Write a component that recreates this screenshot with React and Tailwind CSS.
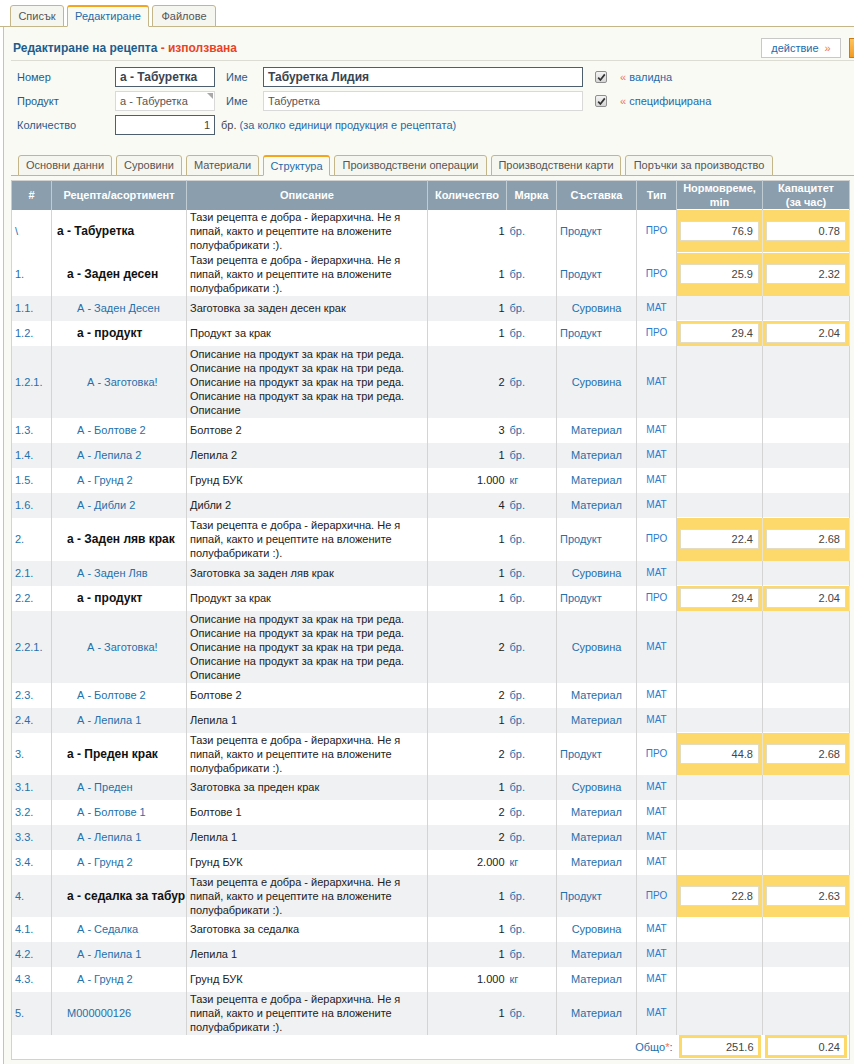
import React from 'react';

const LONG = [
  'Тази рецепта е добра - йерархична. Не я',
  'пипай, както и рецептите на вложените',
  'полуфабрикати :).',
];
const FIVE = [
  'Описание на продукт за крак на три реда.',
  'Описание на продукт за крак на три реда.',
  'Описание на продукт за крак на три реда.',
  'Описание на продукт за крак на три реда.',
  'Описание',
];

// [номер, име, ниво, описание, к-во, мярка, съставка, норма, капацитет, височина, без удебеляване]
const rows = [
  ['\\', 'а - Табуретка', 0, LONG, '1', 'бр.', 'Продукт', '76.9', '0.78', 43],
  ['1.', 'а - Заден десен', 1, LONG, '1', 'бр.', 'Продукт', '25.9', '2.32', 43],
  ['1.1.', 'А - Заден Десен', 2, ['Заготовка за заден десен крак'], '1', 'бр.', 'Суровина'],
  ['1.2.', 'а - продукт', 2, ['Продукт за крак'], '1', 'бр.', 'Продукт', '29.4', '2.04'],
  ['1.2.1.', 'А - Заготовка!', 3, FIVE, '2', 'бр.', 'Суровина', null, null, 72],
  ['1.3.', 'А - Болтове 2', 2, ['Болтове 2'], '3', 'бр.', 'Материал'],
  ['1.4.', 'А - Лепила 2', 2, ['Лепила 2'], '1', 'бр.', 'Материал'],
  ['1.5.', 'А - Грунд 2', 2, ['Грунд БУК'], '1.000', 'кг', 'Материал'],
  ['1.6.', 'А - Дибли 2', 2, ['Дибли 2'], '4', 'бр.', 'Материал'],
  ['2.', 'а - Заден ляв крак', 1, LONG, '1', 'бр.', 'Продукт', '22.4', '2.68', 43],
  ['2.1.', 'А - Заден Ляв', 2, ['Заготовка за заден ляв крак'], '1', 'бр.', 'Суровина'],
  ['2.2.', 'а - продукт', 2, ['Продукт за крак'], '1', 'бр.', 'Продукт', '29.4', '2.04'],
  ['2.2.1.', 'А - Заготовка!', 3, FIVE, '2', 'бр.', 'Суровина', null, null, 72],
  ['2.3.', 'А - Болтове 2', 2, ['Болтове 2'], '2', 'бр.', 'Материал'],
  ['2.4.', 'А - Лепила 1', 2, ['Лепила 1'], '1', 'бр.', 'Материал'],
  ['3.', 'а - Преден крак', 1, LONG, '2', 'бр.', 'Продукт', '44.8', '2.68', 42],
  ['3.1.', 'А - Преден', 2, ['Заготовка за преден крак'], '1', 'бр.', 'Суровина'],
  ['3.2.', 'А - Болтове 1', 2, ['Болтове 1'], '2', 'бр.', 'Материал'],
  ['3.3.', 'А - Лепила 1', 2, ['Лепила 1'], '2', 'бр.', 'Материал'],
  ['3.4.', 'А - Грунд 2', 2, ['Грунд БУК'], '2.000', 'кг', 'Материал'],
  ['4.', 'а - седалка за табур', 1, LONG, '1', 'бр.', 'Продукт', '22.8', '2.63', 42],
  ['4.1.', 'А - Седалка', 2, ['Заготовка за седалка'], '1', 'бр.', 'Суровина'],
  ['4.2.', 'А - Лепила 1', 2, ['Лепила 1'], '1', 'бр.', 'Материал'],
  ['4.3.', 'А - Грунд 2', 2, ['Грунд БУК'], '1.000', 'кг', 'Материал'],
  ['5.', 'M000000126', 1, LONG, '1', 'бр.', 'Материал', null, null, 43],
];

const indent = ['pl-[5px]', 'pl-[15px]', 'pl-[25px]', 'pl-[35px]'];

const topTabs = [
  ['Списък', 'w-[54px]', false],
  ['Редактиране', 'w-[82px]', true],
  ['Файлове', 'w-[64px]', false],
];

const subTabs = [
  ['Основни данни', 'w-[94px]', false],
  ['Суровини', 'w-[66px]', false],
  ['Материали', 'w-[73px]', false],
  ['Структура', 'w-[67px]', true],
  ['Производствени операции', 'w-[153px]', false],
  ['Производствени карти', 'w-[130px]', false],
  ['Поръчки за производство', 'w-[148px]', false],
];

function Tab({ label, width, active, h }) {
  return (
    <div
      className={`${width} ${h} -mb-px flex items-center justify-center rounded-t-[3px] border border-[#c5b68a] ${
        active
          ? 'border-t-2 border-t-[#f3a51b] border-b-[#fafaf5] bg-[#fafaf5] text-[#1f6aa8]'
          : 'bg-[#f6f6f0] text-[#555]'
      }`}
    >
      {label}
    </div>
  );
}

function Check() {
  return (
    <div className="w-[12px] h-[12px] border border-[#8f8f8f] rounded-[2px] bg-gradient-to-b from-[#f4f4f4] to-[#d6d6d6] flex items-center justify-center">
      <svg width="9" height="9" viewBox="0 0 9 9">
        <path d="M1.2 4.6 L3.4 7 L7.8 1.4" fill="none" stroke="#333" strokeWidth="1.7" />
      </svg>
    </div>
  );
}

function YellowCell({ value }) {
  return (
    <td className="bg-[#fdd86a] border-x border-t border-x-[#ece5cc] border-t-white px-[3px] align-middle">
      <div className="h-[20px] bg-white border border-[#e3dcc0] flex items-center justify-end pr-[5px] text-[#444]">
        {value}
      </div>
    </td>
  );
}

export default function App() {
  return (
    <div className="w-[854px] h-[1064px] overflow-hidden bg-white font-['Liberation_Sans',Arial,sans-serif] text-[11px] text-[#333]">
      {/* главни табове */}
      <div className="flex items-end gap-[3px] h-[27px] pl-[10px] border-b border-[#c5b68a]">
        {topTabs.map(([l, w, a]) => (
          <Tab key={l} label={l} width={w} active={a} h="h-[22px]" />
        ))}
      </div>

      <div className="ml-[3px] w-[920px] h-[1040px] border-l border-[#c4c4bb] bg-[#fafaf5] pl-[7px]">
        {/* заглавие */}
        <div className="w-[896px] flex items-center justify-between pt-[11px] pb-[2px] border-b border-[#dcdcd3]">
          <div className="pl-[2px] text-[12px] font-bold text-[#1d5d8c]">
            Редактиране на рецепта <span className="text-[#e9431f]">- използвана</span>
          </div>
          <div className="flex items-center gap-[8px]">
            <div className="w-[80px] h-[20px] border border-[#c8c8c8] bg-white flex items-center justify-center gap-[6px] text-[#1f6aa8]">
              действие <span className="text-[#f2763f]">»</span>
            </div>
            <div className="w-[58px] h-[20px] border border-[#c97a10] bg-gradient-to-b from-[#ffc45a] to-[#f39a1c]" />
          </div>
        </div>

        {/* форма */}
        <div className="pt-[6px] pl-[6px] flex flex-col gap-[4px]">
          <div className="flex items-center h-[20px]">
            <div className="w-[98px] text-[#1d5d8c]">Номер</div>
            <div className="w-[100px] h-[20px] border border-[#4d5e6e] bg-white px-[4px] flex items-center font-bold text-[12px] text-[#3a4450]">
              а - Табуретка
            </div>
            <div className="w-[48px] pl-[11px] text-[#1d5d8c]">Име</div>
            <div className="w-[320px] h-[20px] border border-[#4d5e6e] bg-white px-[4px] flex items-center font-bold text-[12px] text-[#3a4450]">
              Табуретка Лидия
            </div>
            <div className="ml-[12px]"><Check /></div>
            <div className="ml-[13px] text-[#1f6aa8]"><span className="text-[#f2763f]">«</span> валидна</div>
          </div>
          <div className="flex items-center h-[20px]">
            <div className="w-[98px] text-[#1d5d8c]">Продукт</div>
            <div className="relative w-[100px] h-[20px] border border-[#d9d9d9] bg-white px-[4px] flex items-center text-[#555]">
              а - Табуретка
              <div className="absolute top-[1px] right-[1px] w-0 h-0 border-t-[6px] border-l-[6px] border-t-[#a8a8a8] border-l-transparent" />
            </div>
            <div className="w-[48px] pl-[11px] text-[#1d5d8c]">Име</div>
            <div className="w-[320px] h-[20px] border border-[#d9d9d9] bg-white px-[4px] flex items-center text-[#555]">
              Табуретка
            </div>
            <div className="ml-[12px]"><Check /></div>
            <div className="ml-[13px] text-[#1f6aa8]"><span className="text-[#f2763f]">«</span> специфицирана</div>
          </div>
          <div className="flex items-center h-[20px]">
            <div className="w-[98px] text-[#1d5d8c]">Количество</div>
            <div className="w-[100px] h-[20px] border border-[#4d5e6e] bg-white px-[4px] flex items-center justify-end text-[#444]">
              1
            </div>
            <div className="ml-[6px] text-[#444]">
              бр. <span className="text-[#1f6aa8]">(за колко единици продукция е рецептата)</span>
            </div>
          </div>
        </div>

        {/* подтабове */}
        <div className="mt-[20px] w-[843px] flex items-end gap-[4px] h-[21px] pl-[7px] border-b border-[#c5b68a]">
          {subTabs.map(([l, w, a]) => (
            <Tab key={l} label={l} width={w} active={a} h="h-[21px]" />
          ))}
        </div>

        {/* таблица */}
        <table className="mt-[4px] w-[838px] table-fixed border-collapse border border-[#d2d2d2] bg-white">
          <colgroup>
            <col className="w-[40px]" />
            <col className="w-[135px]" />
            <col className="w-[241px]" />
            <col className="w-[79px]" />
            <col className="w-[50px]" />
            <col className="w-[80px]" />
            <col className="w-[40px]" />
            <col className="w-[86px]" />
            <col className="w-[87px]" />
          </colgroup>
          <thead>
            <tr className="h-[29px] bg-[#8a9ead] text-white font-bold text-center leading-[14px]">
              <th className="border-x border-[#c0cbd3]">#</th>
              <th className="border-x border-[#c0cbd3]">Рецепта/асортимент</th>
              <th className="border-x border-[#c0cbd3]">Описание</th>
              <th className="border-x border-[#c0cbd3]">Количество</th>
              <th className="border-x border-[#c0cbd3]">Мярка</th>
              <th className="border-x border-[#c0cbd3]">Съставка</th>
              <th className="border-x border-[#c0cbd3]">Тип</th>
              <th className="border-x border-[#c0cbd3]">Нормовреме,<br />min</th>
              <th className="border-x border-[#c0cbd3]">Капацитет<br />(за час)</th>
            </tr>
          </thead>
          <tbody>
            {rows.map((r, i) => {
              const [num, name, depth, desc, qty, unit, comp, norm, cap, h] = r;
              const isProd = comp === 'Продукт';
              const gray = i > 0 && i % 2 === 0;
              return (
                <tr
                  key={num}
                  className={`${h === 72 ? 'h-[72px]' : h === 43 ? 'h-[43px]' : h === 42 ? 'h-[42px]' : 'h-[25px]'} ${gray ? 'bg-[#f0f1f3]' : 'bg-white'} leading-[14px]`}
                >
                  <td className="border-x border-[#d4d4d4] pl-[3px] text-[#2470ab]">{num}</td>
                  <td className={`border-x border-[#d4d4d4] ${indent[depth]} whitespace-nowrap overflow-hidden ${isProd ? 'font-bold text-[12px] text-[#111]' : 'text-[#2470ab]'}`}>
                    {name}
                  </td>
                  <td className="border-x border-[#d4d4d4] pl-[3px] whitespace-nowrap text-[#222]">
                    {desc.map((d, k) => (
                      <div key={k}>{d}</div>
                    ))}
                  </td>
                  <td className="border-l border-[#d4d4d4] pr-[2px] text-right text-[#222]">{qty}</td>
                  <td className="border-r border-[#d4d4d4] pl-[3px] text-[#2470ab]">{unit}</td>
                  <td className={`border-x border-[#d4d4d4] text-[#2470ab] ${isProd ? 'pl-[3px]' : 'text-center'}`}>{comp}</td>
                  <td className="border-x border-[#d4d4d4] text-center text-[10px] text-[#2a7bd0]">{isProd ? 'ПРО' : 'МАТ'}</td>
                  {norm ? (
                    <>
                      <YellowCell value={norm} />
                      <YellowCell value={cap} />
                    </>
                  ) : (
                    <>
                      <td className="border-x border-[#d4d4d4]" />
                      <td className="border-x border-[#d4d4d4]" />
                    </>
                  )}
                </tr>
              );
            })}
            <tr className="h-[25px] bg-white">
              <td colSpan={7} className="pr-[4px] text-right text-[#2470ab]">
                Общо<span className="text-[#f2763f]">*</span>:
              </td>
              <td className="px-[2px]">
                <div className="h-[23px] border-[3px] border-[#fdd86a] bg-white flex items-center justify-end pr-[4px] text-[#444]">251.6</div>
              </td>
              <td className="px-[2px]">
                <div className="h-[23px] border-[3px] border-[#fdd86a] bg-white flex items-center justify-end pr-[4px] text-[#444]">0.24</div>
              </td>
            </tr>
          </tbody>
        </table>
      </div>
    </div>
  );
}
